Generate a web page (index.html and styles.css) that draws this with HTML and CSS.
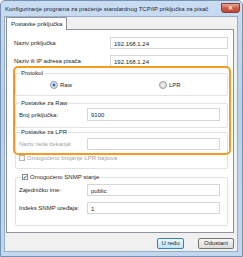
FILE: index.html
```html
<!DOCTYPE html>
<html lang="hr">
<head>
	<meta charset="utf-8">
	<title>Konfiguriranje programa za praćenje standardnog TCP/IP priključka za pisač</title>
	<link rel="stylesheet" href="styles.css">
</head>
<body>
	<div class="window">
		<div class="titlebar">
			<span class="title">Konfiguriranje programa za praćenje standardnog TCP/IP priključka za pisač</span>
			<span class="close">&#x2715;</span>
		</div>
		<div class="client">
			<div class="tabs">
				<span class="tab">Postavke priključka</span>
			</div>
			<div class="pane">
				<div class="row">
					<span class="label">Naziv priključka</span>
					<span class="input wide">192.168.1.24</span>
				</div>
				<div class="row last">
					<span class="label">Naziv ili IP adresa pisača</span>
					<span class="input wide">192.168.1.24</span>
				</div>

				<fieldset class="group protocol">
					<legend>Protokol</legend>
					<div class="radios">
						<span class="radio on">Raw</span>
						<span class="radio">LPR</span>
					</div>
				</fieldset>

				<fieldset class="group raw">
					<legend>Postavke za Raw</legend>
					<div class="row">
						<span class="label">Broj priključka:</span>
						<span class="input">9100</span>
					</div>
				</fieldset>

				<fieldset class="group lpr">
					<legend>Postavke za LPR</legend>
					<div class="row disabled">
						<span class="label">Naziv reda čekanja:</span>
						<span class="input"></span>
					</div>
					<div class="check disabled"><span class="box"></span>Omogućeno brojanje LPR bajtova</div>
				</fieldset>

				<fieldset class="group snmp">
					<legend><span class="check"><span class="box on">&#x2714;</span>Omogućeno SNMP stanje</span></legend>
					<div class="row">
						<span class="label">Zajedničko ime:</span>
						<span class="input">public</span>
					</div>
					<div class="row">
						<span class="label">Indeks SNMP uređaja:</span>
						<span class="input">1</span>
					</div>
				</fieldset>

				<div class="highlight"></div>
			</div>
			<div class="buttons">
				<span class="btn default">U redu</span>
				<span class="btn">Odustani</span>
			</div>
		</div>
	</div>
</body>
</html>
```

FILE: styles.css
```css
*{
	box-sizing: border-box;
}
body{
	margin: 0;
	background: #fff;
	font: 6px/8px "Liberation Sans", Arial, sans-serif;
	color: #1e1e1e;
	overflow: hidden;
}
.window{
	width: 243px;
	height: 257px;
	display: flex;
	flex-direction: column;
	padding: 0 4px 4px 3px;
	background: linear-gradient(#c9dcf1, #b9d0e9 40%, #c3d8ef);
	border: 1px solid #7591b3;
	border-radius: 5px 5px 0 0;
	overflow: hidden;
}
.titlebar{
	height: 15px;
	flex: none;
	display: flex;
	align-items: flex-start;
	justify-content: space-between;
	padding-top: 4px;
}
.title{
	padding-left: 1px;
	white-space: nowrap;
	color: #1b2838;
}
.close{
	width: 19px;
	height: 10px;
	margin-top: -2px;
	margin-right: -2px;
	background: linear-gradient(#e8a797, #cf5a43 55%, #c4452f);
	border: 1px solid #83403a;
	border-radius: 0 0 3px 3px;
	color: #fff;
	line-height: 8px;
	text-align: center;
	font-weight: bold;
}
.client{
	flex: 1;
	display: flex;
	flex-direction: column;
	padding: 0 3px 0 1px;
	background: #f0f0f0;
	border: 1px solid #98adc6;
}
.tabs{
	display: flex;
	height: 12px;
	flex: none;
}
.tab{
	height: 13px;
	padding: 2px 4px 0;
	background: #fff;
	border: 1px solid #8e939b;
	border-bottom: none;
	position: relative;
	z-index: 1;
}
.pane{
	position: relative;
	height: 204px;
	flex: none;
	padding: 7px 5px 0 7px;
	background: #fff;
	border: 1px solid #8e939b;
	display: flex;
	flex-direction: column;
}
.row{
	display: flex;
	align-items: center;
	height: 12px;
	margin-bottom: 6px;
}
.row.last{
	margin-bottom: 2px;
}
.label{
	flex: 1;
}
.input{
	width: 133px;
	height: 12px;
	padding: 2px 3px;
	border: 1px solid #d4d6da;
	background: #fff;
}
.input.wide{
	width: 118px;
}
.disabled{
	color: #a2a2a2;
}
.group{
	margin: 0 0 0 1px;
	width: 213px;
	min-width: 0;
	padding: 0 7px 0 3px;
	border: 1px solid #dfe3e6;
	border-radius: 2px;
}
.group legend{
	padding: 0 1px;
	margin-left: 1px;
	line-height: 8px;
}
.protocol{
	height: 27px;
	margin-bottom: 3px;
}
.radios{
	display: flex;
	padding: 4px 0 0 31px;
}
.radio{
	display: flex;
	align-items: center;
	flex: none;
}
.radio.on{
	width: 109px;
}
.radio::before{
	content: "";
	width: 6px;
	height: 6px;
	margin-right: 2px;
	border-radius: 50%;
	border: 1px solid #9a9a9a;
	background: radial-gradient(#f4f4f4, #d6d6d6);
}
.radio.on::before{
	background: radial-gradient(#2b6cb5 30%, #d6e6f4 40%);
}
.raw{
	height: 29px;
}
.raw .row{
	margin: 1px 0 0;
	height: 13px;
}
.raw .input{
	height: 13px;
}
.lpr{
	height: 41px;
	margin-bottom: 4px;
}
.lpr .row{
	margin: 2px 0 4px;
}
.check{
	display: flex;
	align-items: center;
}
.box{
	width: 6px;
	height: 6px;
	margin-right: 2px;
	border: 1px solid #b8b8b8;
	background: #f6f6f6;
	font-size: 5px;
	line-height: 4px;
	text-align: center;
	color: #2a4f8f;
}
.box.on{
	border-color: #8a8a8a;
	background: #fff;
}
.snmp{
	height: 53px;
	padding-top: 3px;
}
.snmp legend{
	margin-left: 2px;
}
.highlight{
	position: absolute;
	left: 6px;
	top: 36px;
	width: 218px;
	height: 89px;
	border: 2px solid #f39b22;
	border-radius: 5px;
}
.buttons{
	display: flex;
	justify-content: flex-end;
	gap: 14px;
	padding: 5px 0 0;
}
.btn{
	width: 27px;
	height: 11px;
	line-height: 9px;
	text-align: center;
	border: 1px solid #767676;
	border-radius: 2px;
	background: linear-gradient(#f6f6f6, #dcdcdc);
}
.btn.default{
	border-color: #3c7fb1;
	background: linear-gradient(#eaf6fd, #bee6fd);
}
.btn + .btn{
	width: 36px;
}
```
